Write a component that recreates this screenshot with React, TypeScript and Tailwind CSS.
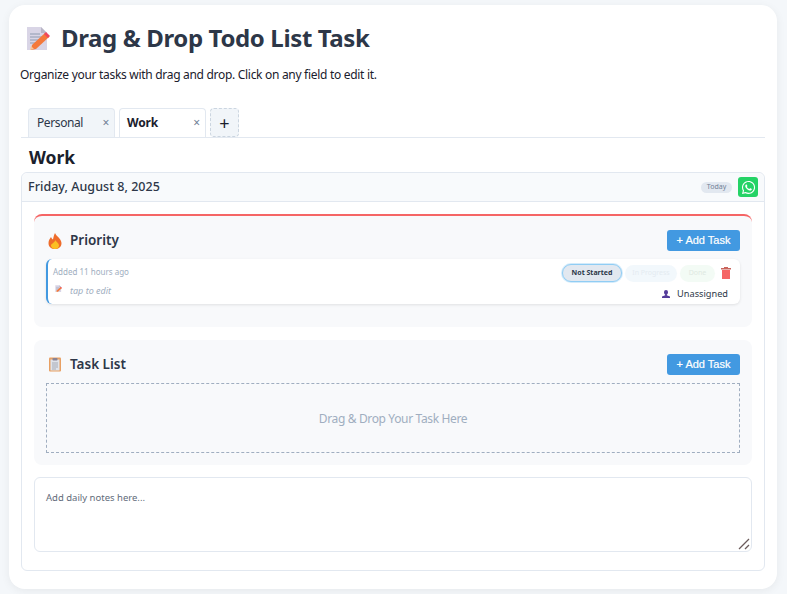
import React from "react";
import { FaWhatsapp } from "react-icons/fa";

const DocIcon = ({ className }: { className?: string }) => (
  <svg viewBox="0 0 24 24" className={className}>
    <path d="M1 1h14l6 6v17H1z" fill="#d9d5e6" />
    <path d="M15 1l6 6h-6z" fill="#b9b6c6" />
    <path d="M4 8h10M4 11h13M4 14h11M4 17h7" stroke="#8f9bb0" strokeWidth="1" />
    <path d="M6 19L19 7l4 4L10 23l-5 1z" fill="#f4793b" />
    <path d="M18 8l2-2 4 4-2 2z" fill="#f0475c" />
    <path d="M5 20l-1 4 4-1z" fill="#f7c59a" />
  </svg>
);

const FireIcon = () => (
  <svg viewBox="0 0 14 16" className="h-4 w-[14px]">
    <path d="M7 0c1 3 6 5 6.500 10 0 4-3 6-6.500 6S.500 14 .500 10C.500 7 2 5.500 3 4c.5 1 1 2 2 2.500C5.500 4 6 2 7 0z" fill="#ee6c2b" />
    <path d="M7.500 7c.5 2 3.500 3 3.500 5.500S9 16 7 16s-4-1.500-4-3.500S6.500 10 7.500 7z" fill="#fbbf24" />
  </svg>
);

const ClipboardIcon = () => (
  <svg viewBox="0 0 12 14" className="h-[15px] w-[12px]">
    <rect width="12" height="14" rx="1" fill="#e8a063" />
    <rect x="1.500" y="2" width="9" height="11" fill="#dfe3ea" />
    <rect x="3.500" y="0.500" width="5" height="2.500" rx="0.800" fill="#8b8494" />
    <path d="M3 5.500h6M3 7.500h6M3 9.500h6M3 11.500h4" stroke="#a7abb5" strokeWidth="1" />
  </svg>
);

const TrashIcon = () => (
  <svg viewBox="0 0 10 12" className="h-3 w-[10px]">
    <path d="M3 0h4v1h3v1.500H0V1h3z" fill="#c9645c" />
    <path d="M1 3h8v9H1z" fill="#f56565" />
  </svg>
);

const PersonIcon = () => (
  <svg viewBox="0 0 8 8" className="h-2 w-2">
    <path d="M2 2a2 2 0 1 1 4 0c0 1.300-.6 2.400-1.200 2.700v.6L8 6.500V8H0V6.500l3.200-1.200v-.6C2.600 4.400 2 3.300 2 2z" fill="#553c9a" />
  </svg>
);

const TaskSection = ({ icon, title, children, className }: { icon: React.ReactNode; title: string; children: React.ReactNode; className: string }) => (
  <section className={`rounded-lg bg-[#f8f9fb] px-3 ${className}`}>
    <div className="flex h-[21px] items-center justify-between">
      <h3 className="flex items-center text-[13.500px] font-semibold leading-none text-[#2d3748]">
        <span className="ml-[2px] mr-2 flex w-[14px] justify-center">{icon}</span>
        {title}
      </h3>
      <button className="flex h-[21px] w-[73px] items-center justify-center rounded-[3px] bg-[#4299e1] font-['Liberation_Sans',sans-serif] text-[11px] font-normal text-white [-webkit-text-stroke:0.2px_white]">
        + Add Task
      </button>
    </div>
    {children}
  </section>
);

export default function App() {
  return (
    <div className="h-[594px] overflow-hidden bg-[#f4f7fa] pl-[9px] pr-[10px] pt-[5px] font-['Noto_Sans',sans-serif]">
      <div className="h-[584px] rounded-2xl bg-white px-3 shadow-[0_2px_10px_rgba(0,0,0,0.06)]">
        <h1 className="flex h-[63px] items-center gap-[11px] pl-[5px] pt-[3px] text-[24px] font-bold tracking-[-0.37px] text-[#2d3748]">
          <DocIcon className="h-6 w-6" />
          Drag &amp; Drop Todo List Task
        </h1>
        <p className="-ml-px text-[12px] leading-[14px] tracking-[-0.3px] text-[#1a202c]">
          Organize your tasks with drag and drop. Click on any field to edit it.
        </p>

        <div className="mt-[26px] flex h-[30px] gap-1 border-b border-[#e2e8f0] pl-[7px]">
          <div className="flex h-[29px] w-[87px] items-center justify-between rounded-t-[4px] border border-b-0 border-[#e2e8f0] bg-[#f1f5f9] pl-2 pr-[5px] text-[12px] tracking-[-0.4px] text-[#2d3748]">
            Personal
            <span className="text-[12px] text-[#718096]">×</span>
          </div>
          <div className="flex h-[29px] w-[87px] items-center justify-between rounded-t-[4px] border border-b-0 border-[#e2e8f0] bg-white pl-[7px] pr-[5px] text-[12px] font-bold tracking-[-0.2px] text-[#1a202c]">
            Work
            <span className="text-[12px] font-normal text-[#718096]">×</span>
          </div>
          <div className="flex h-[29px] w-[29px] items-center justify-center rounded-[4px] border border-dashed border-[#cbd5e0] bg-[#f1f5f9] text-[18px] leading-none text-[#1a202c]">
            +
          </div>
        </div>

        <h2 className="mt-[8px] h-[26px] pl-2 text-[17.500px] font-bold leading-[22px] text-[#1a202c]">Work</h2>

        <div className="h-[399px] rounded-md border border-[#e2e8f0]">
          <div className="flex h-[29px] items-center justify-between rounded-t-md border-b border-[#e2e8f0] bg-[#f8fafc] pl-[6px] pr-[6px]">
            <span className="pt-px text-[12.500px] font-medium tracking-[0.04px] text-[#2d3748]">Friday, August 8, 2025</span>
            <div className="flex items-center gap-[6px]">
              <span className="flex h-[11px] w-[31px] items-center justify-center rounded-full bg-[#e2e8f0] text-[7px] text-[#718096]">Today</span>
              <span className="flex h-5 w-5 items-center justify-center rounded-[3px] bg-[#25d366] text-white">
                <FaWhatsapp className="h-[15px] w-[15px]" />
              </span>
            </div>
          </div>

          <div className="px-3 pt-3">
            <TaskSection
              className="h-[113px] border-t-2 border-[#f56565] pt-[14px]"
              icon={<FireIcon />}
              title="Priority"
            >
              <div className="mt-2 flex h-[45px] justify-between rounded-md border-l-2 border-[#4299e1] bg-white pl-[5px] pr-[7px] shadow-[0_1px_3px_rgba(0,0,0,0.1)]">
                <div className="pt-[7px]">
                  <div className="text-[8px] leading-[11px] text-[#a0aec0]">Added 11 hours ago</div>
                  <div className="mt-[8px] flex items-center gap-[8px] pl-[2px] text-[9px] italic leading-3 text-[#a0aec0]">
                    <DocIcon className="mb-[5px] h-[7px] w-[7px]" />
                    tap to edit
                  </div>
                </div>
                <div className="flex flex-col items-end pt-[5px]">
                  <div className="flex items-center gap-[3px]">
                    <span className="flex h-[18px] w-[60px] items-center justify-center rounded-full border border-[#90cdf4] bg-[#e2e8f0] text-[7px] font-bold text-[#2d3748] shadow-[0_0_0_1px_rgba(144,205,244,0.4)]">Not Started</span>
                    <span className="flex h-[17px] w-[52px] items-center justify-center rounded-full bg-[#f2f8fc] text-[7px] text-[#e4ebf1]">In Progress</span>
                    <span className="flex h-[17px] w-[35px] items-center justify-center rounded-full bg-[#f3fbf5] text-[7px] text-[#dfe9e2]">Done</span>
                    <span className="ml-px flex w-[14px] justify-center"><TrashIcon /></span>
                  </div>
                  <div className="mr-[5px] mt-[6px] flex items-center gap-[7px] text-[9.200px] leading-3 text-[#2d3748]">
                    <PersonIcon />
                    Unassigned
                  </div>
                </div>
              </div>
            </TaskSection>

            <TaskSection className="mt-[13px] h-[125px] pt-[14px]" icon={<ClipboardIcon />} title="Task List">
              <div className="mt-2 flex h-[70px] items-center justify-center border border-dashed border-[#a0aec0] pt-[2px] text-[12px] tracking-[-0.35px] text-[#a0aec0]">
                Drag &amp; Drop Your Task Here
              </div>
            </TaskSection>

            <div className="relative mt-3">
              <textarea
                placeholder="Add daily notes here..."
                className="block h-[75px] w-full resize-none rounded-md border border-[#e2e8f0] py-[13px] pl-[11px] pr-3 text-[9.500px] placeholder:text-[#5f6b7a]"
              />
              <svg viewBox="0 0 12 12" className="pointer-events-none absolute bottom-[2px] right-[2px] h-3 w-3">
                <path d="M1 11L11 1M7 11l4-4" stroke="#6b5b5b" strokeWidth="1.300" fill="none" />
              </svg>
            </div>
          </div>
        </div>
      </div>
    </div>
  );
}
